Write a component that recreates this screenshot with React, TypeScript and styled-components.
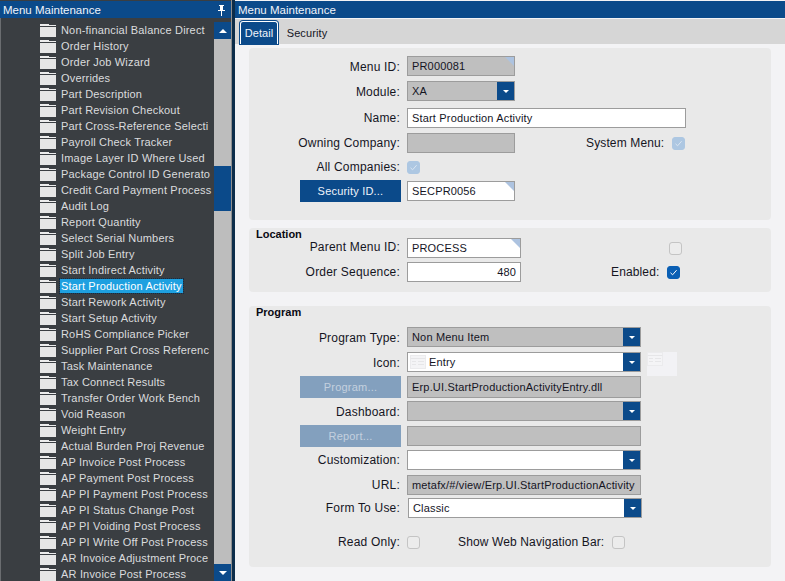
import styled, { createGlobalStyle } from 'styled-components';

const MENU_ITEMS = [
  'Non-financial Balance Direct',
  'Order History',
  'Order Job Wizard',
  'Overrides',
  'Part Description',
  'Part Revision Checkout',
  'Part Cross-Reference Selecti',
  'Payroll Check Tracker',
  'Image Layer ID Where Used',
  'Package Control ID Generato',
  'Credit Card Payment Process',
  'Audit Log',
  'Report Quantity',
  'Select Serial Numbers',
  'Split Job Entry',
  'Start Indirect Activity',
  'Start Production Activity',
  'Start Rework Activity',
  'Start Setup Activity',
  'RoHS Compliance Picker',
  'Supplier Part Cross Referenc',
  'Task Maintenance',
  'Tax Connect Results',
  'Transfer Order Work Bench',
  'Void Reason',
  'Weight Entry',
  'Actual Burden Proj Revenue',
  'AP Invoice Post Process',
  'AP Payment Post Process',
  'AP PI Payment Post Process',
  'AP PI Status Change Post',
  'AP PI Voiding Post Process',
  'AP PI Write Off Post Process',
  'AR Invoice Adjustment Proce',
  'AR Invoice Post Process',
];

const GlobalStyle = createGlobalStyle`
  html, body {
    margin: 0;
    padding: 0;
    height: 100%;
    overflow: hidden;
  }
  body {
    font-family: "Liberation Sans", Arial, sans-serif;
    font-size: 12px;
    color: #15151f;
  }
`;

const Page = styled.div`
  display: flex;
  width: 785px;
  height: 581px;
  overflow: hidden;
  background: #0d2d4a;
`;

const LeftPanel = styled.div`
  display: flex;
  flex-direction: column;
  width: 232px;
  flex-shrink: 0;
  margin-right: 3px;
  box-sizing: border-box;
  background: #3a3e42;
  border-right: 1px solid #8e8e8e;
`;

const TitleBar = styled.div`
  display: flex;
  align-items: center;
  justify-content: space-between;
  height: 17px;
  margin-top: 1px;
  padding: 1px 5px 0 3px;
  box-sizing: border-box;
  flex-shrink: 0;
  background: #0b4a8a;
  color: #f0f4fa;
  font-size: 11.5px;
  line-height: 16px;
`;

const ListArea = styled.div`
  flex: 1;
  display: flex;
  min-height: 0;
  border-left: 1px solid #6a6d70;
  padding-top: 4px;
`;

const MenuList = styled.div`
  flex: 1;
  min-width: 0;
  overflow: hidden;
`;

const MenuRow = styled.div`
  display: flex;
  align-items: center;
  height: 16px;
  padding-left: 39px;
`;

const MenuText = styled.span<{ $selected?: boolean }>`
  margin-left: 4px;
  padding: 0 1px;
  height: 14px;
  line-height: 14px;
  white-space: nowrap;
  overflow: hidden;
  max-width: 152px;
  font-size: 11px;
  letter-spacing: 0.18px;
  color: ${({ $selected }) => ($selected ? '#ffffff' : '#dadcde')};
  background: ${({ $selected }) => ($selected ? '#1ea0e0' : 'transparent')};
  outline: ${({ $selected }) => ($selected ? '1px dotted #0d2d4a' : 'none')};
`;

const Scrollbar = styled.div`
  display: flex;
  flex-direction: column;
  width: 17px;
  flex-shrink: 0;
  margin-left: 1px;
`;

const ScrollButton = styled.div`
  display: flex;
  align-items: center;
  justify-content: center;
  height: 17px;
  flex-shrink: 0;
  background: #0b4a8a;
`;

const ScrollTrack = styled.div`
  flex: 1;
  padding-top: 127px;
  background: #bdbdbd;
`;

const ScrollThumb = styled.div`
  height: 45px;
  background: #0b4a8a;
`;

const RightPanel = styled.div`
  flex: 1;
  display: flex;
  flex-direction: column;
  min-width: 0;
  background: #f3f3f5;
`;

const TabStrip = styled.div`
  display: flex;
  align-items: flex-end;
  height: 26px;
  padding: 3px 0 0 5px;
  box-sizing: border-box;
  flex-shrink: 0;
  background: #d6d6d6;
  border-top: 1px solid #f3f3f5;
`;

const Tab = styled.div<{ $active?: boolean }>`
  display: flex;
  align-items: center;
  justify-content: center;
  height: 23px;
  box-sizing: border-box;
  font-size: 11px;
  letter-spacing: 0.1px;
  ${({ $active }) =>
    $active
      ? `
    width: 38px;
    background: #0b4a8a;
    color: #f0f4fa;
    border: 1px solid #ffffff;
    border-bottom: none;
    border-radius: 3px 3px 0 0;
    box-shadow: 0 0 0 1px #0b4a8a;
  `
      : `
    width: 48px;
    margin-left: 5px;
    color: #15151f;
  `}
`;

const Body = styled.div`
  display: flex;
  flex-direction: column;
  padding: 4px 14px 0 14px;
`;

const Card = styled.div<{ $height: number; $gap?: number }>`
  height: ${({ $height }) => $height}px;
  margin-top: ${({ $gap }) => $gap ?? 0}px;
  box-sizing: border-box;
  background: #e9e9e9;
  border-radius: 4px;
`;

const CardTitle = styled.div`
  height: 12px;
  line-height: 12px;
  padding-left: 7px;
  font-size: 11px;
  font-weight: bold;
  color: #0a0a14;
`;

const Row = styled.div<{ $top: number }>`
  display: flex;
  align-items: center;
  height: 20px;
  margin-top: ${({ $top }) => $top}px;
`;

const Label = styled.span<{ $nudge?: 'down' | 'up' }>`
  width: 151px;
  flex-shrink: 0;
  margin-right: 7px;
  text-align: right;
  font-size: 12px;
  letter-spacing: 0.2px;
  white-space: nowrap;
  padding-top: ${({ $nudge }) => ($nudge === 'down' ? 2 : 0)}px;
  padding-bottom: ${({ $nudge }) => ($nudge === 'up' ? 2 : 0)}px;
`;

const BlueButton = styled.div<{ $disabled?: boolean }>`
  display: flex;
  align-items: center;
  justify-content: center;
  width: 101px;
  height: 22px;
  margin: 0 6px 0 51px;
  flex-shrink: 0;
  font-size: 11px;
  letter-spacing: 0.2px;
  background: ${({ $disabled }) => ($disabled ? '#83a0be' : '#0b4a8a')};
  color: ${({ $disabled }) => ($disabled ? '#c3d0df' : '#f0f4fa')};
`;

const Field = styled.div<{
  $w: number;
  $h?: number;
  $disabled?: boolean;
  $right?: boolean;
  $corner?: boolean;
  $shift?: number;
}>`
  position: relative;
  display: flex;
  align-items: center;
  justify-content: ${({ $right }) => ($right ? 'flex-end' : 'flex-start')};
  width: ${({ $w }) => $w}px;
  height: ${({ $h }) => $h ?? 20}px;
  margin-left: ${({ $shift }) => $shift ?? 0}px;
  padding: 0 4px;
  box-sizing: border-box;
  flex-shrink: 0;
  border: 1px solid #9c9c9c;
  font-size: 11px;
  letter-spacing: 0.17px;
  white-space: nowrap;
  overflow: hidden;
  background: ${({ $disabled }) => ($disabled ? '#bfbfbf' : '#ffffff')};
  &::after {
    content: '';
    display: ${({ $corner }) => ($corner ? 'block' : 'none')};
    position: absolute;
    top: 0;
    right: 0;
    border-top: 9px solid #adc3e0;
    border-left: 9px solid transparent;
  }
`;

const Combo = styled(Field)`
  padding-right: 0;
`;

const ComboText = styled.span<{ $gap?: number }>`
  flex: 1;
  min-width: 0;
  margin-left: ${({ $gap }) => $gap ?? 0}px;
`;

const ComboArrow = styled.span`
  display: flex;
  align-items: center;
  justify-content: center;
  width: 17px;
  height: 18px;
  flex-shrink: 0;
  background: #0b4a8a;
`;

const Caret = styled.span<{ $up?: boolean; $size?: number }>`
  width: 0;
  height: 0;
  border-left: ${({ $size }) => $size ?? 3}px solid transparent;
  border-right: ${({ $size }) => $size ?? 3}px solid transparent;
  ${({ $up, $size }) => `${$up ? 'border-bottom' : 'border-top'}: ${$size ?? 3}px solid #ffffff;`}
`;

const Check = styled.span<{ $state: 'on' | 'muted' | 'off'; $shift?: number }>`
  display: flex;
  align-items: center;
  justify-content: center;
  width: 13px;
  height: 13px;
  flex-shrink: 0;
  box-sizing: border-box;
  border-radius: 3px;
  margin-left: ${({ $shift }) => $shift ?? 0}px;
  border: 1px solid
    ${({ $state }) =>
      $state === 'on' ? '#0a5fb4' : $state === 'muted' ? '#adc7e2' : '#c4c4c4'};
  background: ${({ $state }) =>
    $state === 'on' ? '#0a5fb4' : $state === 'muted' ? '#adc7e2' : '#ececec'};
`;

const InlineLabel = styled.span<{ $shift: number }>`
  margin-left: ${({ $shift }) => $shift}px;
  margin-right: 8px;
  font-size: 12px;
  letter-spacing: 0.13px;
  white-space: nowrap;
`;

const IconPreview = styled.div`
  display: flex;
  align-items: flex-start;
  justify-content: flex-start;
  width: 30px;
  height: 24px;
  margin-left: 6px;
  margin-top: 3px;
  flex-shrink: 0;
  background: #f2f2f5;
`;

const EntryGlyph = styled.svg<{ $inset?: number }>`
  flex-shrink: 0;
  margin-left: ${({ $inset }) => $inset ?? 0}px;
`;

function Folder() {
  return (
    <svg width="16" height="13" viewBox="0 0 16 13" style={{ flexShrink: 0 }} aria-hidden>
      <path d="M0 0h9v1H16v1H0z" fill="#ededed" />
      <path d="M0 3h16v10H0z" fill="#e6e6e6" />
    </svg>
  );
}

function PinIcon() {
  return (
    <svg width="9" height="11" viewBox="0 0 9 11" aria-hidden>
      <path d="M2 0h5v1H6v4h2v1H5v5H4V6H1V5h2V1H2z" fill="#ffffff" />
      <path d="M3 1h1v4H3z" fill="#ffffff" />
    </svg>
  );
}

function Tick({ color }: { color: string }) {
  return (
    <svg width="9" height="9" viewBox="0 0 9 9" aria-hidden>
      <path d="M1.5 4.8 3.6 6.8 7.6 2.2" fill="none" stroke={color} strokeWidth="1" />
    </svg>
  );
}

function EntryIcon({ inset }: { inset?: number }) {
  return (
    <EntryGlyph $inset={inset} width="16" height="14" viewBox="0 0 16 14" aria-hidden>
      <rect x="0.5" y="0.5" width="15" height="13" fill="#f4f4f6" stroke="#ebebed" />
      <path d="M0.5 3.5h15M2 6.5h4M8 6.5h6M2 9.5h4M8 9.5h6" stroke="#e6e6e8" fill="none" />
    </EntryGlyph>
  );
}

export default function App() {
  return (
    <>
      <GlobalStyle />
      <Page>
        <LeftPanel>
          <TitleBar>
            <span>Menu Maintenance</span>
            <PinIcon />
          </TitleBar>
          <ListArea>
            <MenuList>
              {MENU_ITEMS.map((item) => (
                <MenuRow key={item}>
                  <Folder />
                  <MenuText $selected={item === 'Start Production Activity'}>{item}</MenuText>
                </MenuRow>
              ))}
            </MenuList>
            <Scrollbar>
              <ScrollButton>
                <Caret $up $size={4} />
              </ScrollButton>
              <ScrollTrack>
                <ScrollThumb />
              </ScrollTrack>
              <ScrollButton>
                <Caret $size={4} />
              </ScrollButton>
            </Scrollbar>
          </ListArea>
        </LeftPanel>

        <RightPanel>
          <TitleBar>
            <span>Menu Maintenance</span>
          </TitleBar>
          <TabStrip>
            <Tab $active>Detail</Tab>
            <Tab>Security</Tab>
          </TabStrip>
          <Body>
            <Card $height={172}>
              <Row $top={8}>
                <Label $nudge="down">Menu ID:</Label>
                <Field $w={108} $disabled $corner>PR000081</Field>
              </Row>
              <Row $top={5}>
                <Label $nudge="down">Module:</Label>
                <Combo $w={108} $disabled>
                  <ComboText>XA</ComboText>
                  <ComboArrow><Caret /></ComboArrow>
                </Combo>
              </Row>
              <Row $top={7}>
                <Label>Name:</Label>
                <Field $w={279}>Start Production Activity</Field>
              </Row>
              <Row $top={5}>
                <Label>Owning Company:</Label>
                <Field $w={108} $disabled />
                <InlineLabel $shift={71}>System Menu:</InlineLabel>
                <Check $state="muted"><Tick color="#dbe6f2" /></Check>
              </Row>
              <Row $top={4}>
                <Label>All Companies:</Label>
                <Check $state="muted"><Tick color="#dbe6f2" /></Check>
              </Row>
              <Row $top={4}>
                <BlueButton>Security ID...</BlueButton>
                <Field $w={108} $corner>SECPR0056</Field>
              </Row>
            </Card>

            <Card $height={64} $gap={8}>
              <CardTitle>Location</CardTitle>
              <Row $top={-2}>
                <Label $nudge="up">Parent Menu ID:</Label>
                <Field $w={114} $corner>PROCESS</Field>
                <Check $state="off" $shift={148} />
              </Row>
              <Row $top={4}>
                <Label>Order Sequence:</Label>
                <Field $w={114} $right>480</Field>
                <InlineLabel $shift={90}>Enabled:</InlineLabel>
                <Check $state="on"><Tick color="#ffffff" /></Check>
              </Row>
            </Card>

            <Card $height={261} $gap={14}>
              <CardTitle>Program</CardTitle>
              <Row $top={9}>
                <Label $nudge="down">Program Type:</Label>
                <Combo $w={234} $disabled>
                  <ComboText>Non Menu Item</ComboText>
                  <ComboArrow><Caret /></ComboArrow>
                </Combo>
              </Row>
              <Row $top={5}>
                <Label $nudge="down">Icon:</Label>
                <Combo $w={234}>
                  <EntryIcon inset={-2} />
                  <ComboText $gap={3}>Entry</ComboText>
                  <ComboArrow><Caret /></ComboArrow>
                </Combo>
                <IconPreview><EntryIcon /></IconPreview>
              </Row>
              <Row $top={5}>
                <BlueButton $disabled>Program...</BlueButton>
                <Field $w={234} $h={22} $disabled>Erp.UI.StartProductionActivityEntry.dll</Field>
              </Row>
              <Row $top={4}>
                <Label $nudge="down">Dashboard:</Label>
                <Combo $w={234} $disabled>
                  <ComboText />
                  <ComboArrow><Caret /></ComboArrow>
                </Combo>
              </Row>
              <Row $top={5}>
                <BlueButton $disabled>Report...</BlueButton>
                <Field $w={234} $disabled />
              </Row>
              <Row $top={4}>
                <Label>Customization:</Label>
                <Combo $w={234}>
                  <ComboText />
                  <ComboArrow><Caret /></ComboArrow>
                </Combo>
              </Row>
              <Row $top={5}>
                <Label>URL:</Label>
                <Field $w={234} $disabled>metafx/#/view/Erp.UI.StartProductionActivity</Field>
              </Row>
              <Row $top={3}>
                <Label>Form To Use:</Label>
                <Combo $w={234} $shift={1}>
                  <ComboText>Classic</ComboText>
                  <ComboArrow><Caret /></ComboArrow>
                </Combo>
              </Row>
              <Row $top={14}>
                <Label>Read Only:</Label>
                <Check $state="off" />
                <InlineLabel $shift={38}>Show Web Navigation Bar:</InlineLabel>
                <Check $state="off" />
              </Row>
            </Card>
          </Body>
        </RightPanel>
      </Page>
    </>
  );
}
